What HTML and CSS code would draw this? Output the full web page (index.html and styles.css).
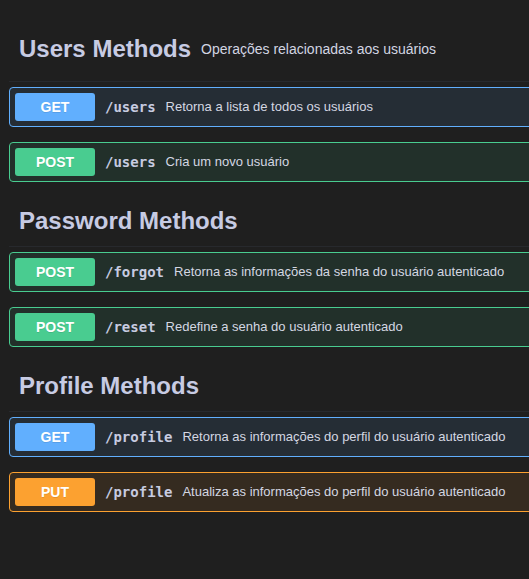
FILE: index.html
```html
<!DOCTYPE html>
<html lang="pt-BR">
<head>
<meta charset="utf-8">
<title>API Methods</title>
<link rel="stylesheet" href="styles.css">
</head>
<body>
<div class="wrap">
  <section class="tag-section">
    <h3 class="tag-header">
      <span class="tag-title">Users Methods</span>
      <small class="tag-desc">Operações relacionadas aos usuários</small>
    </h3>
    <div class="op op-get">
      <span class="method">GET</span>
      <span class="path">/users</span>
      <span class="desc">Retorna a lista de todos os usuários</span>
    </div>
    <div class="op op-post">
      <span class="method">POST</span>
      <span class="path">/users</span>
      <span class="desc">Cria um novo usuário</span>
    </div>
  </section>
  <section class="tag-section">
    <h3 class="tag-header">
      <span class="tag-title">Password Methods</span>
    </h3>
    <div class="op op-post">
      <span class="method">POST</span>
      <span class="path">/forgot</span>
      <span class="desc">Retorna as informações da senha do usuário autenticado</span>
    </div>
    <div class="op op-post">
      <span class="method">POST</span>
      <span class="path">/reset</span>
      <span class="desc">Redefine a senha do usuário autenticado</span>
    </div>
  </section>
  <section class="tag-section">
    <h3 class="tag-header">
      <span class="tag-title">Profile Methods</span>
    </h3>
    <div class="op op-get">
      <span class="method">GET</span>
      <span class="path">/profile</span>
      <span class="desc">Retorna as informações do perfil do usuário autenticado</span>
    </div>
    <div class="op op-put">
      <span class="method">PUT</span>
      <span class="path">/profile</span>
      <span class="desc">Atualiza as informações do perfil do usuário autenticado</span>
    </div>
  </section>
</div>
</body>
</html>
```

FILE: styles.css
```css
html, body {
  margin: 0;
  padding: 0;
  background: #1f1f1f;
  overflow: hidden;
}

body {
  font-family: "Liberation Sans", Arial, sans-serif;
  color: #d4d7e2;
}

.wrap {
  width: 580px;
  padding: 17px 0 0 9px;
}

.tag-header {
  display: flex;
  align-items: center;
  margin: 0 0 5px 0;
  padding: 10px 20px 11px 10px;
  border-bottom: 1px solid rgba(59, 65, 81, 0.3);
  font-weight: bold;
}

.tag-title {
  font-size: 24px;
  line-height: 28px;
  font-weight: bold;
  color: #c7cbe3;
  white-space: nowrap;
}

.tag-desc {
  font-size: 14px;
  line-height: 16px;
  font-weight: normal;
  padding: 13.5px 10px;
  color: #d2d5e2;
  white-space: nowrap;
}

.op {
  display: flex;
  align-items: center;
  height: 28px;
  padding: 5px;
  margin-bottom: 15px;
  border: 1px solid;
  border-radius: 4px;
}

.method {
  flex: none;
  width: 80px;
  padding: 6px 0;
  font-size: 14px;
  line-height: 16px;
  font-weight: bold;
  text-align: center;
  color: #ffffff;
  border-radius: 3px;
  text-shadow: 0 1px 0 rgba(0, 0, 0, 0.1);
}

.path {
  padding: 0 10px;
  font-family: "DejaVu Sans Mono", "Liberation Mono", monospace;
  font-weight: bold;
  font-size: 14px;
  line-height: 16px;
  color: #c7cbe0;
  white-space: nowrap;
}

.desc {
  font-size: 13px;
  line-height: 16px;
  color: #d4d7e2;
  white-space: nowrap;
}

.op-get {
  border-color: #61affe;
  background: rgba(97, 175, 254, 0.1);
}
.op-get .method { background: #61affe; }

.op-post {
  border-color: #49cc90;
  background: rgba(73, 204, 144, 0.1);
}
.op-post .method { background: #49cc90; }

.op-put {
  border-color: #fca130;
  background: rgba(252, 161, 48, 0.1);
}
.op-put .method { background: #fca130; }
```
